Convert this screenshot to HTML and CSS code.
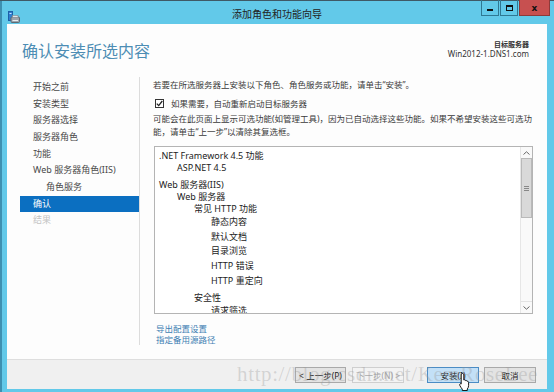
FILE: index.html
```html
<!DOCTYPE html>
<html lang="zh-CN">
<head>
  <meta charset="UTF-8" />
  <title>添加角色和功能向导</title>
  <link rel="stylesheet" href="styles.css">
</head>
<body>
  <div class="window">

    <!-- 标题栏 -->
    <div class="titlebar">
      <div class="app-icon">
        <svg width="12" height="12" viewBox="0 0 12 12">
          <rect x="0.5" y="0.5" width="4" height="9" fill="#2f7fd0" stroke="#1d5fa8" />
          <rect x="1.5" y="2" width="2" height="1" fill="#cfe6ff" />
          <rect x="3" y="6" width="8.5" height="5.5" rx="1" fill="#9aa4ad" stroke="#5f6a73" />
          <rect x="4.5" y="4.5" width="5.5" height="2" fill="#dfe4e8" stroke="#7d878f" stroke-width="0.6" />
          <rect x="4.5" y="9" width="5.5" height="1" fill="#e8ecef" />
        </svg>
      </div>
      <div class="title">添加角色和功能向导</div>
      <div class="win-buttons">
        <div class="win-btn"><span class="glyph-min"></span></div>
        <div class="win-btn"><span class="glyph-max"></span></div>
        <div class="win-btn close">x</div>
      </div>
    </div>

    <div class="client">
      <div class="page-header">
        <h1>确认安装所选内容</h1>
        <div class="target">
          <div class="target-label">目标服务器</div>
          <div>Win2012-1.DNS1.com</div>
        </div>
      </div>

      <div class="page-body">
        <!-- 左侧导航 -->
        <div class="nav">
          <div class="nav-item">开始之前</div>
          <div class="nav-item">安装类型</div>
          <div class="nav-item">服务器选择</div>
          <div class="nav-item">服务器角色</div>
          <div class="nav-item">功能</div>
          <div class="nav-item">Web 服务器角色(IIS)</div>
          <div class="nav-item sub">角色服务</div>
          <div class="nav-item active">确认</div>
          <div class="nav-item disabled">结果</div>
        </div>

        <!-- 主区域 -->
        <div class="main">
          <div class="intro">若要在所选服务器上安装以下角色、角色服务或功能，请单击“安装”。</div>
          <div class="check-row">
            <span class="checkbox">
              <svg width="7" height="7" viewBox="0 0 7 7"><path d="M0.8 3.6 L2.7 5.6 L6.3 1" fill="none" stroke="#222" stroke-width="1.3" /></svg>
            </span>
            <span>如果需要，自动重新启动目标服务器</span>
          </div>
          <div class="note">可能会在此页面上显示可选功能(如管理工具)，因为已自动选择这些功能。如果不希望安装这些可选功能，请单击“上一步”以清除其复选框。</div>

          <div class="listbox">
            <div class="list-content">
              <div class="item">.NET Framework 4.5 功能</div>
              <div class="item l1">ASP.NET 4.5</div>
              <div class="item group">Web 服务器(IIS)</div>
              <div class="item l1">Web 服务器</div>
              <div class="item l2">常见 HTTP 功能</div>
              <div class="item l3">静态内容</div>
              <div class="item l3">默认文档</div>
              <div class="item l3">目录浏览</div>
              <div class="item l3">HTTP 错误</div>
              <div class="item l3">HTTP 重定向</div>
              <div class="item l2 group">安全性</div>
              <div class="item l3">请求筛选</div>
            </div>
            <div class="scrollbar">
              <div class="sb-arrow">
                <svg width="7" height="4" viewBox="0 0 7 4"><path d="M0.5 3.5 L3.5 0.8 L6.5 3.5" fill="none" stroke="#666" /></svg>
              </div>
              <div class="sb-thumb"><span class="grip"></span></div>
              <div class="sb-track"></div>
              <div class="sb-arrow">
                <svg width="7" height="4" viewBox="0 0 7 4"><path d="M0.5 0.5 L3.5 3.2 L6.5 0.5" fill="none" stroke="#666" /></svg>
              </div>
            </div>
          </div>

          <div class="links">
            <a href="#">导出配置设置</a>
            <a href="#">指定备用源路径</a>
          </div>
        </div>
      </div>

      <!-- 底部按钮 -->
      <div class="footer">
        <div class="watermark">http://blog.csdn.net/KemRoseLee</div>
        <button class="btn">&lt; 上一步(P)</button>
        <button class="btn disabled">下一步(N) &gt;</button>
        <button class="btn default">安装(I)</button>
        <button class="btn">取消</button>
        <svg class="cursor" width="12" height="18" viewBox="0 0 12 18">
          <path d="M3.5 0.5 C4.3 0.5 4.8 1 4.8 1.8 L4.8 7 L5.2 6.8 C6 6.6 6.6 7 6.6 7.6 C7.4 7.3 8 7.7 8.1 8.3 C8.9 8.1 9.6 8.6 9.6 9.3 L9.6 12.5 C9.6 14 9 15.2 8.3 16 L8.3 17.5 L3.3 17.5 L3.3 16.2 C2.6 15.4 1.6 14 0.9 12.6 C0.4 11.6 0.7 10.8 1.5 10.7 C1.9 10.7 2.2 11 2.2 11 L2.2 1.8 C2.2 1 2.7 0.5 3.5 0.5 Z" fill="#fff" stroke="#000" stroke-width="0.9" />
        </svg>
      </div>
    </div>

  </div>
</body>
</html>
```

FILE: styles.css
```css
body {
  margin: 0;
  width: 554px;
  height: 392px;
  overflow: hidden;
  background-color: #62c9e9;
  font-family: "Noto Sans", "Noto Sans CJK SC", sans-serif;
  color: #333;
  box-shadow: inset 0 1px 0 #3f5966, inset 2px 0 0 #3d90b1;
}

.window {
  height: 392px;
  display: flex;
  flex-direction: column;
}

/* 标题栏 */
.titlebar {
  height: 24px;
  display: grid;
  grid-template-columns: 1fr auto 1fr;
  align-items: start;
}

.app-icon {
  padding: 6px 0 0 8px;
}

.title {
  font-family: "Noto Sans CJK SC", sans-serif;
  font-size: 10px;
  line-height: 12px;
  padding-top: 8px;
  color: #222;
}

.win-buttons {
  justify-self: end;
  display: flex;
  padding-right: 4px;
}

.win-btn {
  width: 18px;
  height: 16px;
  box-sizing: border-box;
  border: 1px solid #2f7893;
  border-top: none;
  margin-right: 1px;
  display: flex;
  align-items: center;
  justify-content: center;
  position: relative;
}

.win-btn.close {
  width: 31px;
  margin-right: 0;
  background-color: #c75050;
  border-color: #8d3a3a;
  font-family: "DejaVu Sans", sans-serif;
  font-weight: bold;
  font-size: 9px;
  line-height: 10px;
  color: #111;
}

.glyph-min {
  width: 6px;
  height: 2px;
  background-color: #111;
  margin-top: 5px;
}

.glyph-max {
  width: 5px;
  height: 3px;
  border: 1.5px solid #111;
  border-top-width: 2px;
}

/* 客户区 */
.client {
  flex: 1;
  margin: 0 7px 3px 7px;
  display: flex;
  flex-direction: column;
  background-color: #fdfdfd;
}

.page-header {
  height: 51px;
  display: flex;
  justify-content: space-between;
  padding: 0 18px 0 15px;
}

h1 {
  margin: 0;
  padding-top: 17px;
  font-family: "Noto Sans CJK SC", sans-serif;
  font-weight: normal;
  font-size: 16px;
  line-height: 18px;
  color: #4d8db4;
}

.target {
  padding-top: 15px;
  text-align: right;
  font-size: 8px;
  line-height: 10px;
  color: #333;
}

.target-label {
  font-family: "Noto Sans CJK SC", sans-serif;
  font-weight: bold;
  font-size: 7px;
}

.page-body {
  flex: 1;
  display: flex;
}

/* 左侧导航 */
.nav {
  width: 133px;
  box-sizing: border-box;
  margin: 2px 0 14px 0;
  padding: 2px 0 0 13px;
  border-right: 1px solid #dcdcdc;
  font-size: 9px;
}

.nav-item {
  line-height: 16.67px;
  height: 16.67px;
  padding-left: 13px;
  color: #4a4a4a;
  white-space: nowrap;
}

.nav-item.sub {
  padding-left: 26px;
}

.nav-item.active {
  background-color: #0b6fc1;
  color: #fff;
}

.nav-item.disabled {
  color: #c4c4c4;
}

/* 主区域 */
.main {
  flex: 1;
  padding: 4px 14px 0 13px;
  font-size: 8.5px;
  color: #3a3a3a;
}

.intro {
  line-height: 12px;
}

.check-row {
  display: flex;
  align-items: center;
  height: 14px;
  margin-top: 5px;
  padding-left: 2px;
}

.checkbox {
  width: 9px;
  height: 9px;
  box-sizing: border-box;
  border: 1px solid #333;
  background-color: #fff;
  margin-right: 7px;
  display: flex;
  align-items: center;
  justify-content: center;
}

.note {
  margin-top: 1.5px;
  line-height: 13px;
}

.listbox {
  margin: 8.5px 0 0 1px;
  height: 168px;
  box-sizing: border-box;
  border: 1px solid #b4b4b4;
  background-color: #fff;
  display: flex;
}

.list-content {
  flex: 1;
  overflow: hidden;
  padding: 3px 0 0 4px;
  font-size: 9px;
  color: #222;
}

.item {
  height: 12px;
  line-height: 12px;
  white-space: nowrap;
}

.item.l1 {
  padding-left: 18px;
}

.item.l2 {
  padding-left: 35px;
}

.item.l3 {
  padding-left: 52px;
  height: 14.7px;
  line-height: 14.7px;
}

.item.group {
  margin-top: 5px;
}

.item.l2.group {
  margin-top: 4px;
}

.scrollbar {
  width: 11px;
  display: flex;
  flex-direction: column;
  border-left: 1px solid #e6e6e6;
  background-color: #f9f9f9;
}

.sb-arrow {
  height: 11px;
  display: flex;
  align-items: center;
  justify-content: center;
}

.sb-thumb {
  height: 60px;
  box-sizing: border-box;
  border: 1px solid #b9b9b9;
  background-color: #d9d9d9;
  display: flex;
  align-items: center;
  justify-content: center;
}

.grip {
  width: 5px;
  height: 5px;
  background: repeating-linear-gradient(#888 0 1px, transparent 1px 2px);
}

.sb-track {
  flex: 1;
  border-bottom: 1px solid #e3e3e3;
}

.links {
  margin-top: 9px;
  display: flex;
  flex-direction: column;
  padding-left: 3px;
}

.links a {
  font-size: 8.5px;
  line-height: 11px;
  color: #3d7fb3;
  text-decoration: none;
}

/* 底部 */
.footer {
  height: 30px;
  box-sizing: border-box;
  border-top: 1px solid #dedede;
  background-color: #f0f0f0;
  display: flex;
  align-items: center;
  justify-content: flex-end;
  padding: 1px 11px 0 0;
  position: relative;
}

.btn {
  height: 16px;
  width: 52px;
  padding: 0;
  box-sizing: border-box;
  border: 1px solid #a9a9a9;
  background-color: #e3e3e3;
  font-family: "Noto Sans", "Noto Sans CJK SC", sans-serif;
  font-size: 8.5px;
  color: #222;
  margin-left: 5px;
}

.btn:first-of-type {
  width: 51px;
}

.btn.disabled {
  background-color: #f3f3f3;
  border-color: #cfcfcf;
  color: #a3a3a3;
  margin-left: 6px;
  margin-right: 18px;
}

.btn.default {
  background-color: #c3e0f7;
  border-color: #4b8cc4;
}

.watermark {
  position: absolute;
  right: 9px;
  top: 2px;
  font-family: "Liberation Serif", serif;
  font-size: 21px;
  letter-spacing: 0.6px;
  color: rgba(150, 150, 150, 0.32);
  white-space: nowrap;
  pointer-events: none;
}

.cursor {
  position: absolute;
  left: 452px;
  top: 13px;
}
```
